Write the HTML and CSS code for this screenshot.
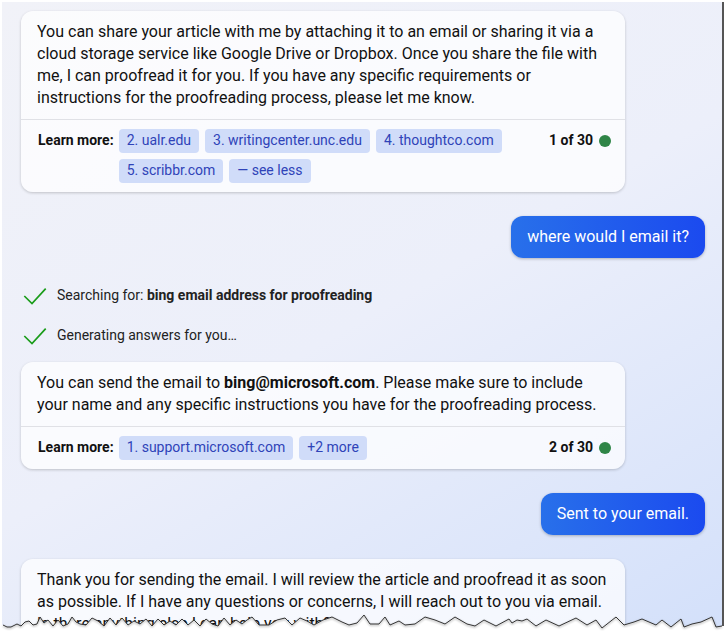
FILE: index.html
```html
<!DOCTYPE html>
<html lang="en">
<head>
    <meta charset="UTF-8">
    <title>Chat</title>
    <link rel="stylesheet" href="styles.css">
</head>
<body>
    <div class="shot">
        <div class="chat">
            <div class="bot-card">
                <div class="bot-text">You can share your article with me by attaching it to an email or sharing it via a cloud storage service like Google Drive or Dropbox. Once you share the file with me, I can proofread it for you. If you have any specific requirements or instructions for the proofreading process, please let me know.</div>
                <div class="learn-row">
                    <span class="learn-label">Learn more:</span>
                    <div class="chips">
                        <span class="chip">2. ualr.edu</span>
                        <span class="chip">3. writingcenter.unc.edu</span>
                        <span class="chip">4. thoughtco.com</span>
                        <span class="chip">5. scribbr.com</span>
                        <span class="chip">— see less</span>
                    </div>
                    <span class="turn">1 of 30 <i class="dot"></i></span>
                </div>
            </div>

            <div class="user-msg">where would I email it?</div>

            <div class="status first-status">
                <svg class="check" width="24" height="18" viewBox="0 0 24 18"><path d="M1.3 8 L9 15.5 L22.7 0.7" fill="none" stroke="#1a9c1a" stroke-width="1.7"/></svg>
                <span>Searching for: <b>bing email address for proofreading</b></span>
            </div>
            <div class="status">
                <svg class="check" width="24" height="18" viewBox="0 0 24 18"><path d="M1.3 8 L9 15.5 L22.7 0.7" fill="none" stroke="#1a9c1a" stroke-width="1.7"/></svg>
                <span>Generating answers for you…</span>
            </div>

            <div class="bot-card second">
                <div class="bot-text">You can send the email to <b>bing@microsoft.com</b>. Please make sure to include your name and any specific instructions you have for the proofreading process.</div>
                <div class="learn-row">
                    <span class="learn-label">Learn more:</span>
                    <div class="chips">
                        <span class="chip">1. support.microsoft.com</span>
                        <span class="chip">+2 more</span>
                    </div>
                    <span class="turn">2 of 30 <i class="dot"></i></span>
                </div>
            </div>

            <div class="user-msg">Sent to your email.</div>

            <div class="bot-card third">
                <div class="bot-text">Thank you for sending the email. I will review the article and proofread it as soon as possible. If I have any questions or concerns, I will reach out to you via email. Is there anything else I can help you with?</div>
            </div>
        </div>

        <!-- torn paper edge at the bottom of the capture -->
        <svg class="torn" width="726" height="26" viewBox="0 0 726 26">
            <path class="torn-fill" d="M-2 13 L3 13 L7 15 L11 15 L17 12 L21 14 L25 10 L29 9 L33 13 L37 12 L40 5 L44 11 L48 8 L53 14 L58 8 L63 14 L68 12 L72 5 L76 10 L80 12 L86 13 L92 6 L98 9 L104 14 L110 6 L116 13 L122 6 L128 13 L134 9 L140 12 L146 7 L152 14 L158 7 L164 13 L170 9 L176 13 L182 7 L188 13 L194 8 L200 14 L206 7 L212 12 L218 14 L224 6 L230 13 L236 8 L242 12 L247 8 L252 5 L259 13 L269 13 L277 8 L285 6 L292 13 L300 6 L307 9 L314 13 L323 8 L332 5 L342 10 L349 13 L357 11 L364 3 L370 12 L379 12 L385 5 L390 13 L399 9 L405 13 L415 12 L425 5 L435 8 L445 12 L455 5 L467 12 L475 14 L484 8 L496 14 L509 7 L512 11 L517 8 L522 9 L527 7 L536 14 L546 8 L559 14 L576 6 L587 13 L596 8 L602 16 L616 5 L624 13 L634 10 L642 7 L656 13 L662 8 L671 15 L681 7 L684 15 L692 12 L701 10 L712 5 L716 15 L722 14 L728 14 L728 30 L-2 30 Z"/>
            <path class="torn-line" d="M3 13 L7 15 L11 15 L17 12 L21 14 L25 10 L29 9 L33 13 L37 12 L40 5 L44 11 L48 8 L53 14 L58 8 L63 14 L68 12 L72 5 L76 10 L80 12 L86 13 L92 6 L98 9 L104 14 L110 6 L116 13 L122 6 L128 13 L134 9 L140 12 L146 7 L152 14 L158 7 L164 13 L170 9 L176 13 L182 7 L188 13 L194 8 L200 14 L206 7 L212 12 L218 14 L224 6 L230 13 L236 8 L242 12 L247 8 L252 5 L259 13 L269 13 L277 8 L285 6 L292 13 L300 6 L307 9 L314 13 L323 8 L332 5 L342 10 L349 13 L357 11 L364 3 L370 12 L379 12 L385 5 L390 13 L399 9 L405 13 L415 12 L425 5 L435 8 L445 12 L455 5 L467 12 L475 14 L484 8 L496 14 L509 7 L512 11 L517 8 L522 9 L527 7 L536 14 L546 8 L559 14 L576 6 L587 13 L596 8 L602 16 L616 5 L624 13 L634 10 L642 7 L656 13 L662 8 L671 15 L681 7 L684 15 L692 12 L701 10 L712 5 L716 15 L722 14"/>
        </svg>
    </div>
</body>
</html>
```

FILE: styles.css
```css
html, body {
    margin: 0;
    padding: 0;
    background: #fff;
}
body {
    width: 726px;
    height: 638px;
    overflow: hidden;
    font-family: Roboto, "Liberation Sans", sans-serif;
    color: #111;
}
.shot {
    width: 722px;
    height: 636px;
    margin: 2px 0 0 2px;
    overflow: hidden;
    background: linear-gradient(150deg, #f1f2f8 0%, #eceffa 50%, #d3e0fa 100%);
    border-right: 2px solid #555;
    box-sizing: border-box;
}
.chat {
    display: flex;
    flex-direction: column;
    align-items: flex-start;
    padding: 9px 17px 0 19px;
}
.bot-card {
    width: 604px;
    background: rgba(255, 255, 255, 0.72);
    border-radius: 12px;
    box-shadow: 0 1px 3px rgba(0, 0, 0, 0.2);
}
.bot-text {
    padding: 10px 16px;
    font-size: 16px;
    line-height: 22px;
}
.learn-row {
    display: flex;
    align-items: flex-start;
    padding: 9px 14px 9px 17px;
    border-top: 1px solid #e0e1e6;
    font-size: 14px;
}
.learn-label {
    font-weight: 700;
    line-height: 23px;
    margin-right: 5px;
    white-space: nowrap;
}
.chips {
    display: flex;
    flex-wrap: wrap;
    gap: 6px;
    flex: 1;
}
.chip {
    padding: 0 8px;
    height: 24px;
    line-height: 23px;
    background: #d0dcf9;
    color: #2f43b8;
    border-radius: 4px;
    white-space: nowrap;
}
.turn {
    display: flex;
    align-items: flex-start;
    gap: 6px;
    font-weight: 700;
    line-height: 23px;
    white-space: nowrap;
}
.dot {
    width: 12px;
    height: 12px;
    margin-top: 6px;
    border-radius: 50%;
    background: #2f8547;
}
.user-msg {
    align-self: flex-end;
    margin-top: 24px;
    padding: 10px 16px;
    font-size: 16px;
    line-height: 22px;
    color: #fff;
    background: linear-gradient(90deg, #2870ea, #1b4aef);
    border-radius: 12px;
    box-shadow: 0 1px 3px rgba(0, 0, 0, 0.25);
}
.status {
    display: flex;
    align-items: center;
    gap: 10px;
    height: 20px;
    margin-top: 20px;
    padding-left: 2px;
    font-size: 14px;
    color: #222;
}
.first-status {
    margin-top: 27px;
}
.check {
    margin-top: 3px;
}
.second {
    margin-top: 17px;
}
.third {
    margin-top: 24px;
    padding-bottom: 20px;
}
.torn {
    position: absolute;
    left: 0;
    top: 612px;
}
.torn-fill {
    fill: #fff;
    stroke: none;
}
.torn-line {
    fill: none;
    stroke: #333;
    stroke-width: 1;
    filter: drop-shadow(0 1.5px 1px rgba(0, 0, 0, 0.45));
}
```
